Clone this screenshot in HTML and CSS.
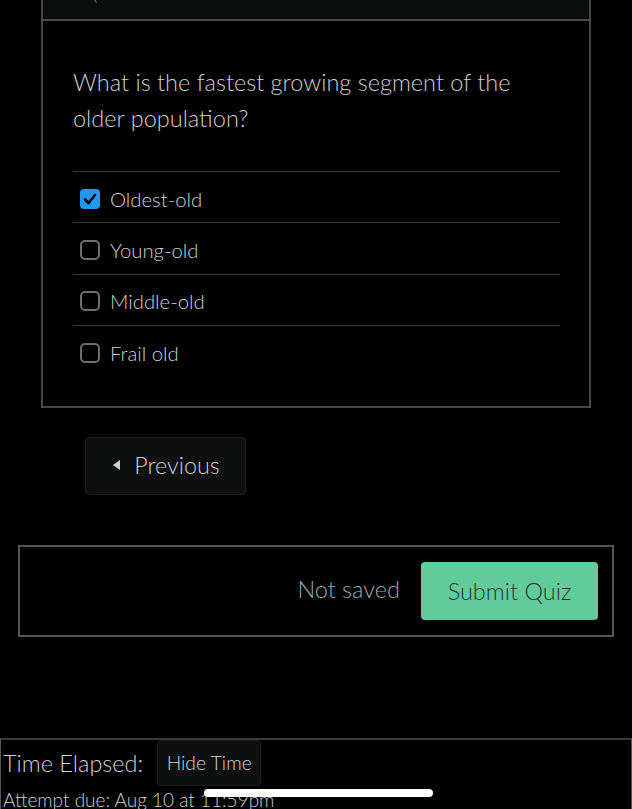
FILE: index.html
```html
<!DOCTYPE html>
<html>
<head>
<meta charset="utf-8">
<link rel="stylesheet" href="styles.css">
</head>
<body>
<div class="page">
  <div class="question">
    <div class="q-header"><span class="hdr-l">‹</span><span class="hdr-r">ˈ</span></div>
    <div class="q-body">
      <p class="q-text">What is the fastest growing segment of the older population?</p>
      <ul class="answers">
        <li class="answer"><span class="box checked"><svg viewBox="0 0 20 20" width="20" height="20"><rect x="0" y="0" width="20" height="20" rx="4" fill="#2196f3"/><path d="M5 10.5 L8.5 14 L15 6" fill="none" stroke="#000" stroke-width="2.6" stroke-linecap="round" stroke-linejoin="round"/></svg></span><span class="label">Oldest-old</span></li>
        <li class="answer"><span class="box"></span><span class="label">Young-old</span></li>
        <li class="answer"><span class="box"></span><span class="label">Middle-old</span></li>
        <li class="answer last"><span class="box"></span><span class="label">Frail old</span></li>
      </ul>
    </div>
  </div>

  <div class="nav">
    <button class="btn prev"><span class="tri"></span>Previous</button>
  </div>

  <div class="submit-box">
    <span class="not-saved">Not saved</span>
    <button class="submit">Submit Quiz</button>
  </div>

  <div class="timer">
    <div class="timer-row">
      <span class="elapsed">Time Elapsed:</span>
      <button class="btn hide">Hide Time</button>
    </div>
    <div class="due">Attempt due: Aug 10 at 11:59pm</div>
    <div class="home-indicator"></div>
  </div>
</div>
</body>
</html>
```

FILE: styles.css
```css
* { box-sizing: border-box; }
html, body {
  margin: 0;
  padding: 0;
  background: #000;
  height: 809px;
  overflow: hidden;
}
body {
  font-family: Lato, "Open Sans", sans-serif;
  font-weight: 300;
  color: #cdd1d4;
}
.page {
  display: flex;
  flex-direction: column;
}
.question {
  margin-left: 41px;
  width: 550px;
  border: 2px solid #484848;
  border-top: none;
}
.q-header {
  height: 21px;
  background: #0b0d0d;
  border-bottom: 2px solid #4a4a4a;
  position: relative;
  overflow: hidden;
}
.hdr-l, .hdr-r {
  position: absolute;
  top: -14px;
  color: #bbb;
  font-size: 18px;
}
.hdr-l { left: 50px; }
.hdr-r { left: 479px; }
.q-body {
  padding: 43px 29px 29px 30px;
}
.q-text {
  margin: 0 0 35px;
  font-size: 23.5px;
  line-height: 36px;
  font-weight: 300;
  color: #cdd1d4;
}
.answers {
  list-style: none;
  margin: 0;
  padding: 0;
}
.answer {
  display: flex;
  align-items: center;
  gap: 10px;
  height: 51.4px;
  padding-left: 7px;
  padding-top: 3px;
  border-top: 1px solid #3a3a3a;
  font-size: 20.3px;
}
.box {
  width: 20px;
  height: 20px;
  border: 2px solid #6e6e6e;
  border-radius: 5px;
  flex: none;
}
.box.checked {
  border: none;
}
.box svg { display: block; }
.label { color: #cdd1d4; }
.nav {
  margin-top: 29px;
  padding-left: 85px;
}
.btn {
  font-family: Lato, "Open Sans", sans-serif;
  font-weight: 300;
  background: #0e1010;
  border: 1px solid #1e2020;
  border-radius: 4px;
  color: #cdd1d4;
  cursor: pointer;
}
.prev {
  width: 161px;
  height: 58px;
  font-size: 23.3px;
  display: flex;
  align-items: center;
  justify-content: center;
  gap: 14px;
  padding: 0 0 2px 2px;
}
.tri {
  width: 0;
  height: 0;
  border-top: 5px solid transparent;
  border-bottom: 5px solid transparent;
  border-right: 7px solid #cdd1d4;
}
.submit-box {
  margin: 50px 18px 0 18px;
  height: 92px;
  border: 2px solid #555;
  display: flex;
  align-items: center;
  justify-content: flex-end;
  padding-right: 14px;
  gap: 21px;
}
.not-saved {
  font-size: 23.5px;
  color: #a4a8ab;
  padding-bottom: 4px;
}
.submit {
  font-family: Lato, "Open Sans", sans-serif;
  font-weight: 300;
  width: 177px;
  height: 58px;
  background: #61cb9c;
  border: none;
  border-radius: 4px;
  color: #1d3a2d;
  font-size: 23.5px;
  padding: 0;
}
.timer {
  margin-top: 101px;
  border-top: 2px solid #3a3a3a;
  border-left: 1px solid #555;
  border-right: 1px solid #555;
  height: 80px;
  position: relative;
}
.timer-row {
  display: flex;
  align-items: center;
  gap: 14px;
  padding-left: 2px;
}
.elapsed {
  font-size: 23.5px;
  color: #cdd1d4;
}
.hide {
  width: 104px;
  height: 46px;
  font-size: 19.3px;
  padding: 0;
}
.due {
  font-size: 19px;
  line-height: 20px;
  color: #cdd1d4;
  padding-left: 2px;
  margin-top: 4px;
}
.home-indicator {
  position: absolute;
  left: 203px;
  top: 49px;
  width: 229px;
  height: 8px;
  background: #fff;
  border-radius: 4px;
}
```
